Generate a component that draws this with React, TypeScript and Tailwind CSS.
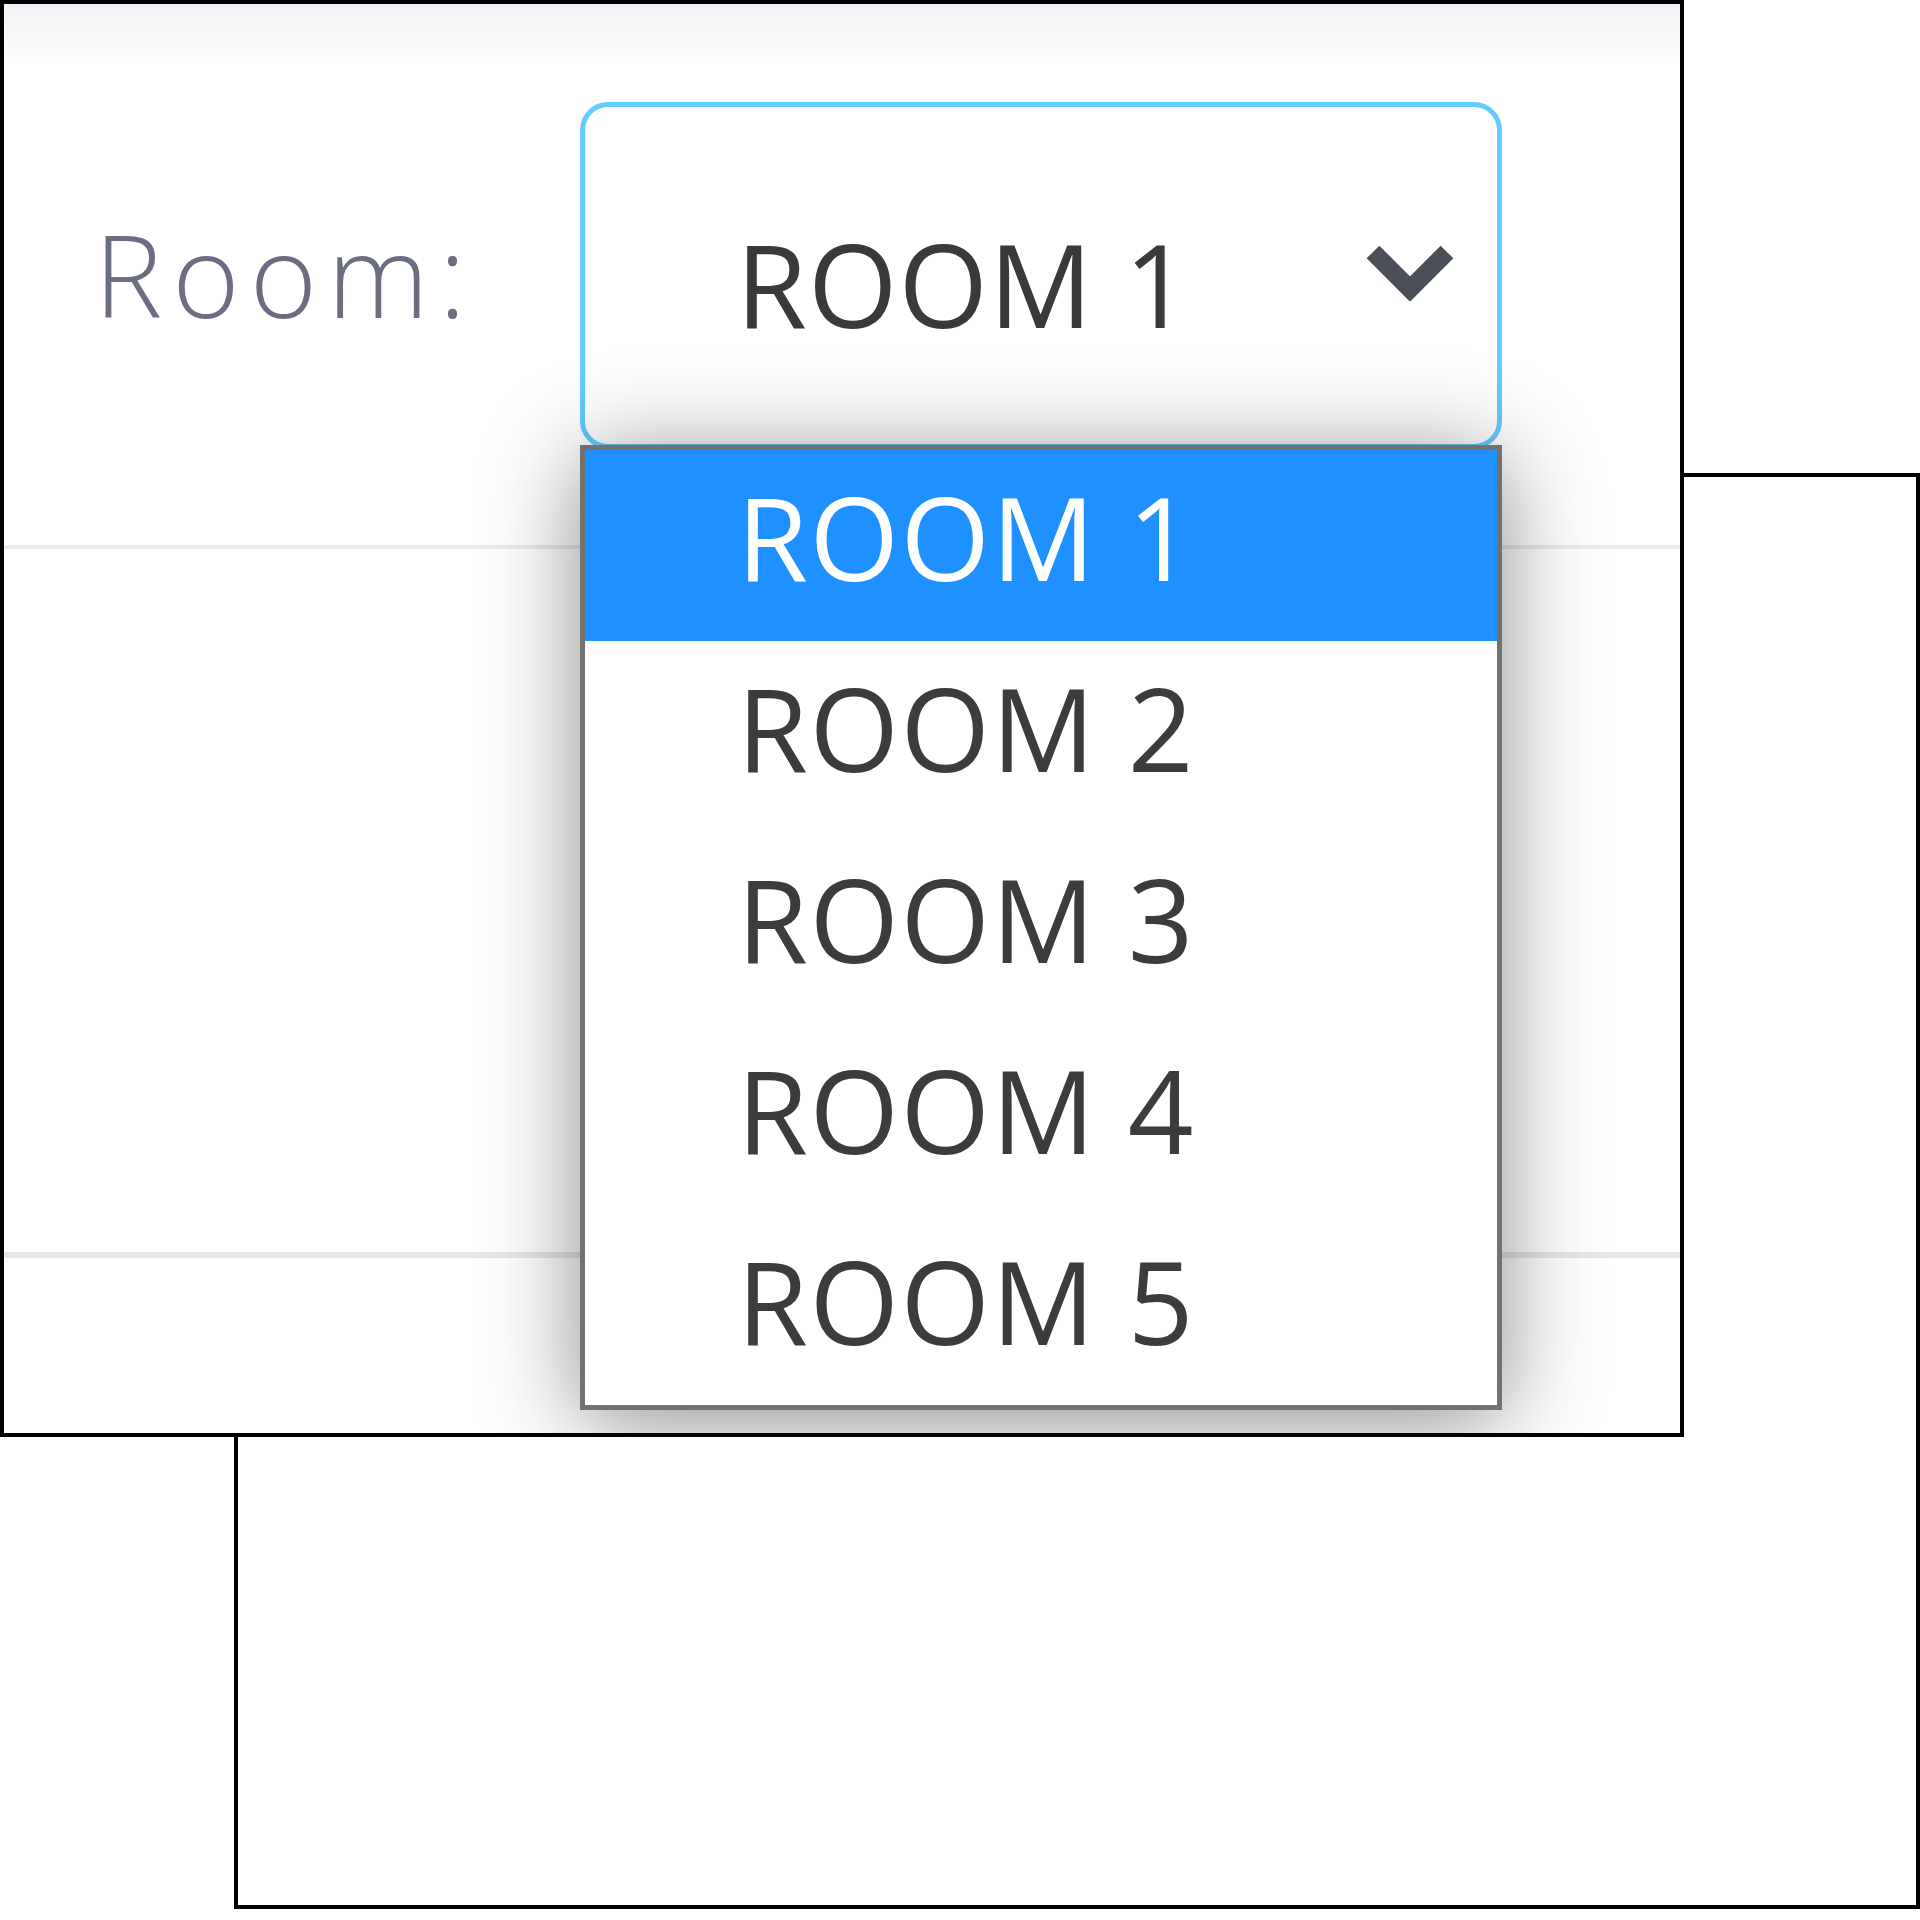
import { useState } from 'react'

const rooms = ['ROOM 1', 'ROOM 2', 'ROOM 3', 'ROOM 4', 'ROOM 5']

function Chevron() {
  return (
    <svg width="92" height="58" viewBox="0 0 92 58" className="mt-[136px] shrink-0">
      <path d="M9 9 L46 46 L83 9" fill="none" stroke="#4b5058" strokeWidth="18" strokeLinejoin="miter" />
    </svg>
  )
}

function RoomSelect() {
  const [selected] = useState('ROOM 1')

  return (
    <div className="relative w-[922px] h-[347px] mt-[98px]">
      <div className="flex items-start justify-between w-full h-full pl-[151px] pr-[41px] bg-white border-[5px] border-[#63cbfd] rounded-[28px]">
        <div className="mt-[119px] text-[115px] leading-none tracking-[1px] text-[#3a3a3a]">{selected}</div>
        <Chevron />
      </div>

      {/* open list */}
      <ul className="absolute left-0 top-[343px] z-10 w-[922px] bg-white border-[5px] border-[#717171] shadow-[0_12px_90px_rgba(0,0,0,0.45)]">
        {rooms.map((room) => (
          <li
            key={room}
            className={`h-[191px] pt-[29px] pl-[152px] text-[115px] leading-none tracking-[1.5px] ${
              room === selected ? 'bg-[#1e90ff] text-white' : 'text-[#3c3c3c]'
            }`}
          >
            {room}
          </li>
        ))}
      </ul>
    </div>
  )
}

export default function App() {
  return (
    <div className="relative w-[1920px] h-[1920px] bg-white font-['Open_Sans','Lato',sans-serif]">
      {/* window behind */}
      <div className="absolute left-[234px] top-[473px] w-[1686px] h-[1436px] border-4 border-black bg-white" />

      {/* front window */}
      <div className="absolute left-0 top-0 w-[1684px] h-[1437px] border-4 border-black bg-white overflow-hidden flex flex-col">
        <div className="flex items-start h-[545px] shrink-0 border-b-4 border-[#eaeaf1] bg-[linear-gradient(to_bottom,#f4f4f8,#fcfcfd_50px,#ffffff_60px)]">
          <div className="w-[576px] shrink-0 pl-[90px] pt-[212px] text-[115px] leading-none font-light tracking-[10px] text-[#6b6d80]">
            Room:
          </div>
          <RoomSelect />
        </div>
        <div className="h-[709px] shrink-0 border-b-[6px] border-[#e5e5eb]" />
        <div className="flex-1" />
      </div>
    </div>
  )
}
